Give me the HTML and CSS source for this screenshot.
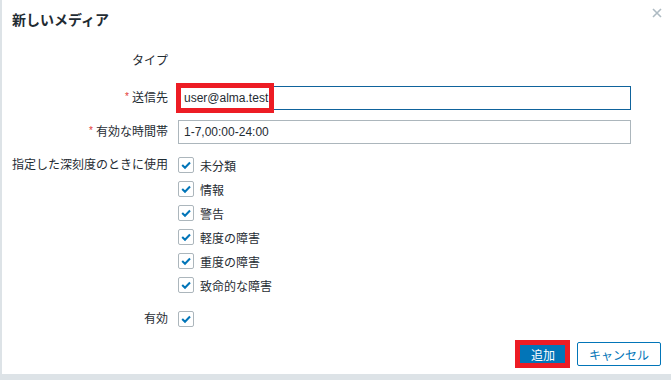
FILE: index.html
```html
<!DOCTYPE html>
<html lang="ja">
<head>
    <meta charset="UTF-8">
    <title>新しいメディア</title>
    <link rel="stylesheet" href="styles.css">
</head>
<body>
    <div class="dialog">
        <!-- En-tête -->
        <div class="dialog-head">
            <h2>新しいメディア</h2>
            <button class="close" title="閉じる">
                <svg width="10" height="10" viewBox="0 0 10 10"><path d="M1 1 L9 9 M9 1 L1 9" stroke="#aebbc3" stroke-width="1.6"/></svg>
            </button>
        </div>

        <!-- Formulaire -->
        <div class="form">
            <div class="row row-type">
                <label>タイプ</label>
                <div></div>
            </div>
            <div class="row row-sendto">
                <label class="required">送信先</label>
                <div class="field">
                    <input type="text" class="focused" value="user@alma.test">
                    <span class="caret"></span>
                    <span class="mark mark-input"></span>
                </div>
            </div>
            <div class="row row-period">
                <label class="required">有効な時間帯</label>
                <div class="field"><input type="text" value="1-7,00:00-24:00"></div>
            </div>
            <div class="row row-severity">
                <label>指定した深刻度のときに使用</label>
                <ul class="checks">
                    <li><span class="cb"></span>未分類</li>
                    <li><span class="cb"></span>情報</li>
                    <li><span class="cb"></span>警告</li>
                    <li><span class="cb"></span>軽度の障害</li>
                    <li><span class="cb"></span>重度の障害</li>
                    <li><span class="cb"></span>致命的な障害</li>
                </ul>
            </div>
            <div class="row row-active">
                <label>有効</label>
                <div class="checks"><span class="cb"></span></div>
            </div>
        </div>

        <!-- Boutons -->
        <div class="dialog-foot">
            <div class="btn-wrap">
                <button class="btn btn-primary">追加</button>
                <span class="mark mark-btn"></span>
            </div>
            <button class="btn btn-alt">キャンセル</button>
        </div>
    </div>
</body>
</html>
```

FILE: styles.css
```css
body { margin: 0; background: #dde3e7; font-family: "Liberation Sans", "Noto Sans CJK JP", sans-serif; font-size: 12px; color: #1f2c33; overflow: hidden; }
.dialog { margin-left: 2px; width: 669px; height: 374px; background: #fff; box-sizing: border-box; }

.dialog-head { display: flex; justify-content: space-between; align-items: flex-start; height: 49px; padding: 0 9px 0 10px; }
.dialog-head h2 { margin: 0; font-size: 14px; font-weight: bold; line-height: 40px; color: #1f2c33; }
.close { border: 0; background: none; padding: 0; margin-top: 8px; width: 10px; height: 10px; cursor: pointer; }
.close svg { display: block; }

.form { padding-left: 10px; }
.row { display: grid; grid-template-columns: 156px 453px; column-gap: 10px; }
.row label { text-align: right; height: 24px; line-height: 24px; }
.required::before { content: "*"; color: #e33734; margin-right: 3px; font-size: 10px; position: relative; top: -2px; }
.row-type { height: 24px; margin-bottom: 13px; }
.row-sendto { margin-bottom: 10px; }
.row-period { margin-bottom: 9px; }
.row-severity { margin-bottom: 10px; }

.field { position: relative; height: 24px; }
.field input { display: block; width: 100%; height: 24px; box-sizing: border-box; border: 1px solid #acb6bc; padding: 0 5px; font-family: "Liberation Sans", sans-serif; font-size: 12px; color: #1f2c33; margin: 0; outline: none; }
.field input.focused { border-color: #0f639c; }
.caret { position: absolute; left: 91px; top: 6px; width: 1px; height: 13px; background: #1f2c33; }

.checks { list-style: none; margin: 0; padding: 0; }
.checks li, .row-active .checks { display: flex; align-items: center; height: 24px; }
.cb { width: 14px; height: 14px; border: 1px solid #acb6bc; border-radius: 2px; margin-right: 6px; background: #fff url("data:image/svg+xml,%3Csvg xmlns='http://www.w3.org/2000/svg' width='14' height='14'%3E%3Cpath d='M3.2 7 L6 9.8 L11 4.5' fill='none' stroke='%230275b8' stroke-width='2'/%3E%3C/svg%3E") no-repeat center; }

.dialog-foot { display: flex; justify-content: flex-end; gap: 10px; padding: 11px 10px 0 0; }
.btn-wrap { position: relative; }
.btn { height: 24px; padding: 0 11px; border-radius: 2px; font-family: "Noto Sans CJK JP", sans-serif; font-size: 12px; cursor: pointer; }
.btn-primary { background: #0275b8; border: 1px solid #0275b8; color: #fff; width: 48px; }
.btn-alt { background: #fff; border: 1px solid #0275b8; color: #0275b8; width: 84px; }

/* cadres rouges d'annotation */
.mark { position: absolute; border: 5px solid #ed1c24; box-sizing: border-box; pointer-events: none; }
.mark-input { left: -2px; top: -3px; width: 98px; height: 30px; }
.mark-btn { left: -4px; top: -2px; width: 55px; height: 28px; }
```
